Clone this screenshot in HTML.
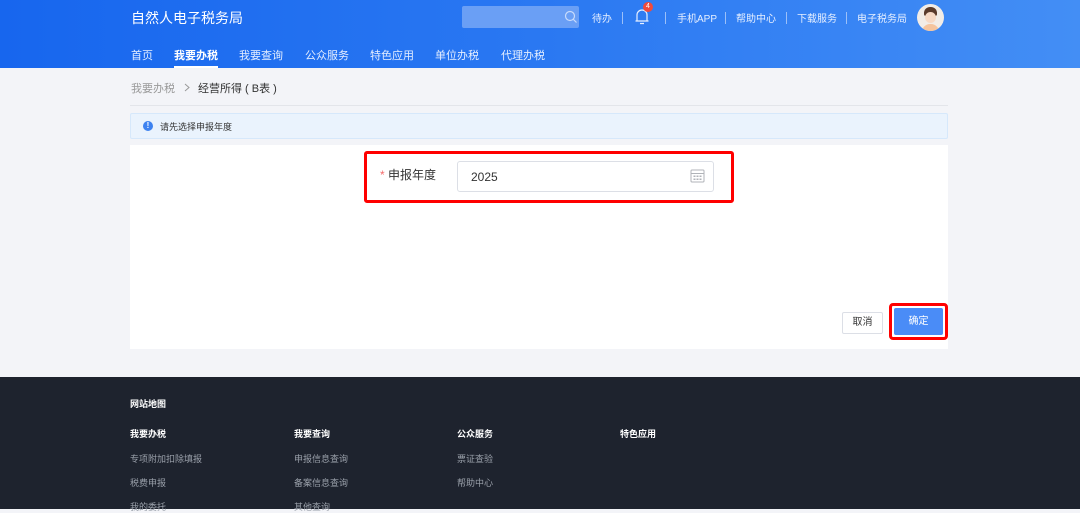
<!DOCTYPE html>
<html><head><meta charset="utf-8"><style>
*{margin:0;padding:0;box-sizing:border-box}
body{width:1080px;height:509px;overflow:hidden;background:#f3f4f8;font-family:"Liberation Sans","Noto Sans CJK SC",sans-serif;position:relative}
.hd{position:absolute;left:0;top:0;width:1080px;height:68px;background:linear-gradient(90deg,#1766ee,#2a78f2 50%,#438ef5)}
.a{position:absolute;white-space:nowrap}
.t{color:#fff}
.nav{font-size:11px;color:#e4eeff;top:47px}
.sep{position:absolute;top:12px;width:1px;height:12px;background:#9cc0f8}
.hr{font-size:10px;color:#e6efff;top:10px}
.ft{position:absolute;left:0;top:377px;width:1080px;height:132px;background:#1e232e}
.fh{font-size:9px;color:#fff;font-weight:bold}
.fl{font-size:9px;color:#9aa0aa}
</style></head><body>
<div class="hd">
<div class="a t" style="left:131px;top:8px;font-size:14px">自然人电子税务局</div>
<div class="a" style="left:462px;top:6px;width:117px;height:22px;background:#6a9ff5;border-radius:2px"></div>
<svg class="a" style="left:564px;top:10px" width="14" height="14"><circle cx="6" cy="6" r="4.5" fill="none" stroke="#c8dbfb" stroke-width="1.2"/><line x1="9.3" y1="9.3" x2="12.5" y2="12.5" stroke="#c8dbfb" stroke-width="1.2"/></svg>
<div class="a hr" style="left:592px">待办</div>
<div class="sep" style="left:622px"></div>
<svg class="a" style="left:634px;top:6px" width="16" height="20"><path d="M3 15 V9 a5 5 0 0 1 10 0 V15 Z M1.5 15 H14.5 M6 17.5 H10" fill="none" stroke="#e6efff" stroke-width="1.2"/></svg>
<div class="a" style="left:643px;top:2px;width:10px;height:10px;border-radius:50%;background:#f04a3c;color:#fff;font-size:7px;text-align:center;line-height:10px">4</div>
<div class="sep" style="left:665px"></div>
<div class="a hr" style="left:677px">手机APP</div>
<div class="sep" style="left:725px"></div>
<div class="a hr" style="left:736px">帮助中心</div>
<div class="sep" style="left:786px"></div>
<div class="a hr" style="left:797px">下载服务</div>
<div class="sep" style="left:846px"></div>
<div class="a hr" style="left:857px">电子税务局</div>
<div class="a" style="left:917px;top:4px;width:27px;height:27px;border-radius:50%;background:#f2ece6;overflow:hidden"><div style="position:absolute;left:7px;top:3px;width:13px;height:9px;border-radius:6px 6px 2px 2px;background:#5a3a2a"></div><div style="position:absolute;left:8px;top:8px;width:11px;height:11px;border-radius:50%;background:#f7d9c4"></div><div style="position:absolute;left:5px;top:20px;width:17px;height:10px;border-radius:8px 8px 0 0;background:#f5c49d"></div></div>
<div class="a nav" style="left:131px">首页</div>
<div class="a nav" style="left:174px;color:#fff;font-weight:bold">我要办税</div>
<div class="a" style="left:174px;top:66px;width:44px;height:2px;background:#fff"></div>
<div class="a nav" style="left:239px">我要查询</div>
<div class="a nav" style="left:305px">公众服务</div>
<div class="a nav" style="left:370px">特色应用</div>
<div class="a nav" style="left:435px">单位办税</div>
<div class="a nav" style="left:501px">代理办税</div>
</div>
<div class="a" style="left:131px;top:80px;font-size:11px;color:#999">我要办税</div>
<svg class="a" style="left:183px;top:83px" width="8" height="9"><path d="M2 1 L6 4.5 L2 8" fill="none" stroke="#999" stroke-width="1"/></svg>
<div class="a" style="left:198px;top:80px;font-size:11px;color:#333">经营所得 ( B表 )</div>
<div class="a" style="left:130px;top:105px;width:818px;height:1px;background:#e3e5ea"></div>
<div class="a" style="left:130px;top:113px;width:818px;height:26px;background:#eaf3fd;border:1px solid #d6e8fb;border-radius:2px"></div>
<div class="a" style="left:143px;top:121px;width:10px;height:10px;border-radius:50%;background:#3d82f0;color:#fff;font-size:8px;line-height:10px;text-align:center;font-weight:bold">!</div>
<div class="a" style="left:160px;top:120px;font-size:9px;color:#333">请先选择申报年度</div>
<div class="a" style="left:130px;top:145px;width:818px;height:204px;background:#fff"></div>
<div class="a" style="left:364px;top:151px;width:370px;height:52px;border:3px solid #f00;border-radius:3px"></div>
<div class="a" style="left:380px;top:166px;font-size:12px;color:#333"><span style="color:#f56c6c">*</span> 申报年度</div>
<div class="a" style="left:457px;top:161px;width:257px;height:31px;border:1px solid #dcdfe6;border-radius:3px;background:#fff"></div>
<div class="a" style="left:471px;top:170px;font-size:12px;color:#333">2025</div>
<svg class="a" style="left:690px;top:168px" width="15" height="15"><rect x="1" y="2" width="13" height="12" rx="1" fill="none" stroke="#b0b3b8"/><line x1="1" y1="5.5" x2="14" y2="5.5" stroke="#b0b3b8"/><g fill="#b0b3b8"><rect x="3.5" y="7.5" width="2" height="1.5"/><rect x="6.5" y="7.5" width="2" height="1.5"/><rect x="9.5" y="7.5" width="2" height="1.5"/><rect x="3.5" y="10.5" width="2" height="1.5"/><rect x="6.5" y="10.5" width="2" height="1.5"/><rect x="9.5" y="10.5" width="2" height="1.5"/></g></svg>
<div class="a" style="left:842px;top:312px;width:41px;height:22px;border:1px solid #dcdfe6;border-radius:2px;font-size:10px;color:#333;text-align:center;line-height:20px">取消</div>
<div class="a" style="left:889px;top:303px;width:59px;height:37px;border:3px solid #f00;border-radius:4px"></div>
<div class="a" style="left:894px;top:308px;width:49px;height:27px;background:#4a8cf7;border-radius:2px;font-size:10px;color:#fff;text-align:center;line-height:27px">确定</div>
<div class="ft">
<div class="a fh" style="left:130px;top:20px">网站地图</div>
<div class="a fh" style="left:130px;top:50px">我要办税</div>
<div class="a fh" style="left:294px;top:50px">我要查询</div>
<div class="a fh" style="left:457px;top:50px">公众服务</div>
<div class="a fh" style="left:620px;top:50px">特色应用</div>
<div class="a fl" style="left:130px;top:75px">专项附加扣除填报</div>
<div class="a fl" style="left:294px;top:75px">申报信息查询</div>
<div class="a fl" style="left:457px;top:75px">票证查验</div>
<div class="a fl" style="left:130px;top:99px">税费申报</div>
<div class="a fl" style="left:294px;top:99px">备案信息查询</div>
<div class="a fl" style="left:457px;top:99px">帮助中心</div>
<div class="a fl" style="left:130px;top:123px">我的委托</div>
<div class="a fl" style="left:294px;top:123px">其他查询</div>
</div>
</body></html>
